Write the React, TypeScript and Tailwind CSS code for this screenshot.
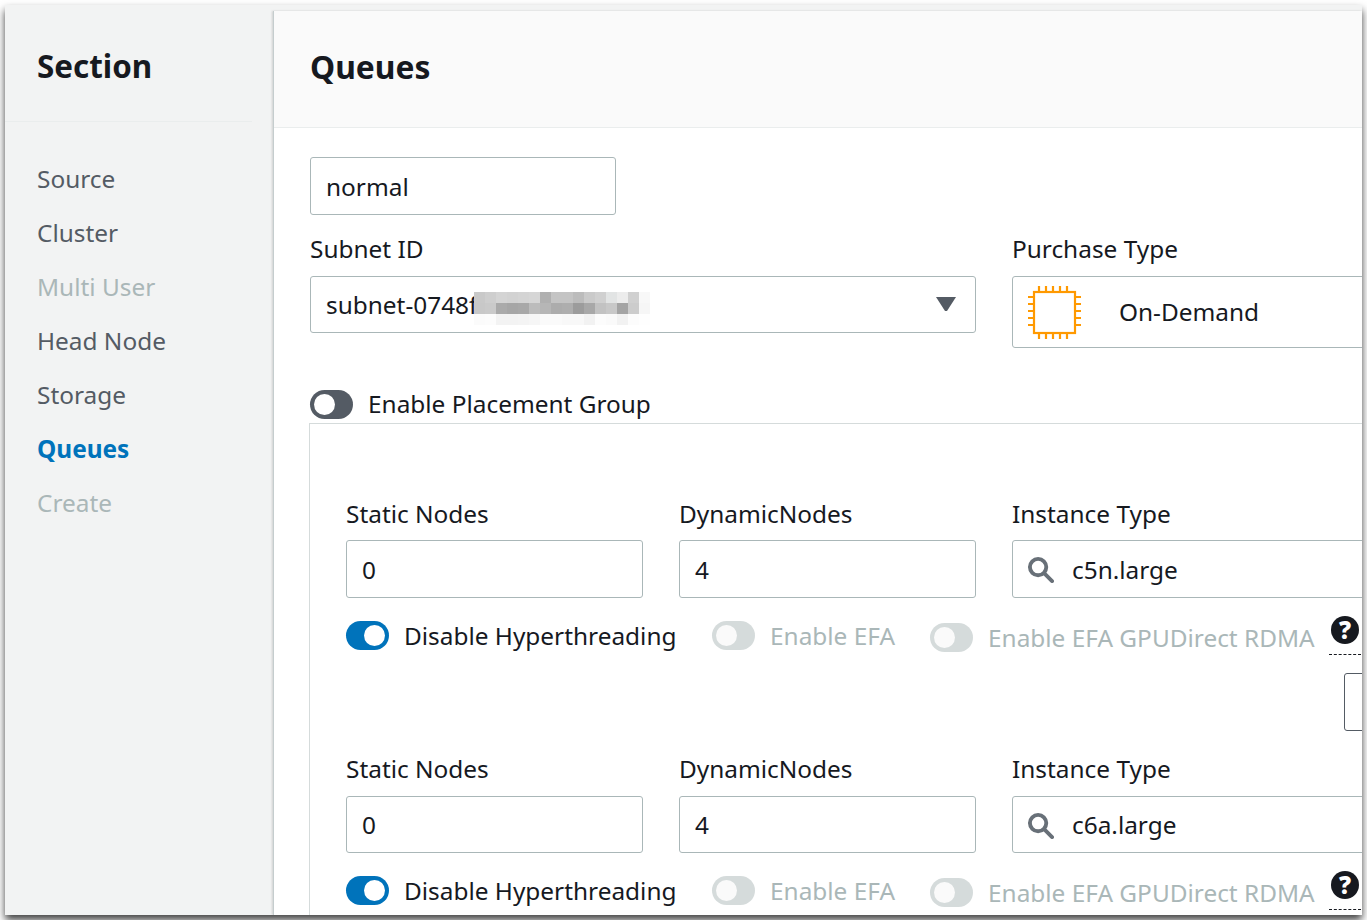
import React from "react";

const font = { fontFamily: '"Noto Sans", sans-serif' };

function Chip() {
  const ticks = [0, 1, 2, 3, 4];
  return (
    <svg width="54" height="54" viewBox="0 0 54 54" fill="none" stroke="#ff9900" strokeWidth="2.2" className="mt-[1px]">
      <rect x="6" y="6" width="41" height="41" />
      {ticks.map((i) => {
        const p = 11 + i * 7;
        return <path key={i} d={`M${p} 0v6M${p} 47v6M0 ${p}h6M47 ${p}h6`} />;
      })}
    </svg>
  );
}

function Toggle({ on, disabled }: { on?: boolean; disabled?: boolean }) {
  const bg = disabled ? "bg-[#d5dbdb]" : on ? "bg-[#0073bb]" : "bg-[#545b64]";
  return (
    <span className={`flex h-[29px] w-[43px] shrink-0 items-center rounded-full px-[4px] ${bg} ${on ? "justify-end" : "justify-start"}`}>
      <span className={`h-[21px] w-[21px] rounded-full ${disabled ? "bg-[#fafafa]" : "bg-white"}`} />
    </span>
  );
}

function Search() {
  return (
    <svg width="27" height="27" viewBox="0 0 28 28" fill="none" stroke="#687078" strokeWidth="4" className="shrink-0">
      <circle cx="11.5" cy="11.5" r="8.5" />
      <path d="M18 18l8 8" strokeLinecap="round" />
    </svg>
  );
}

function Box({ children, className = "" }: { children: React.ReactNode; className?: string }) {
  return (
    <div className={`flex items-center rounded-[3px] border border-[#aab7b8] bg-white text-[24.4px] text-[#16191f] ${className}`}>
      {children}
    </div>
  );
}

function OptionsRow() {
  return (
    <div className="mt-[23px] flex h-[36px] items-start whitespace-nowrap text-[24.4px] leading-[29px]">
      <Toggle on />
      <span className="ml-[15px] w-[308px] shrink-0 text-[#16191f]">Disable Hyperthreading</span>
      <Toggle disabled />
      <span className="ml-[15px] w-[160px] shrink-0 text-[#aab7b8]">Enable EFA</span>
      <div className="mt-[2px] flex">
        <Toggle disabled />
        <span className="ml-[15px] w-[341px] shrink-0 text-[#aab7b8]">Enable EFA GPUDirect RDMA</span>
      </div>
      <div className="-mt-[5px] flex h-[39px] w-[32px] shrink-0 justify-center border-b border-dashed border-[#16191f]">
        <span className="flex h-[28px] w-[28px] items-center justify-center rounded-full bg-[#16191f] text-[24px] font-black leading-none text-white">
          ?
        </span>
      </div>
    </div>
  );
}

function Fields({ type, second }: { type: string; second?: boolean }) {
  const labelH = second ? "h-[45px]" : "h-[44px]";
  const boxH = second ? "h-[57px]" : "h-[58px]";
  return (
    <div className="flex gap-[36px]">
      {[
        ["Static Nodes", "0"],
        ["DynamicNodes", "4"],
      ].map(([l, v]) => (
        <div key={l} className="w-[297px] shrink-0">
          <div className={`${labelH} text-[24.4px] leading-[35px] text-[#16191f]`}>{l}</div>
          <Box className={`${boxH} px-[15px] pt-[2px]`}>{v}</Box>
        </div>
      ))}
      <div className="w-[420px] shrink-0">
        <div className={`${labelH} text-[24.4px] leading-[35px] text-[#16191f]`}>Instance Type</div>
        <Box className={`${boxH} gap-[18px] pl-[14px] pt-[1px]`}>
          <Search />
          <span className="pt-[1px]">{type}</span>
        </Box>
      </div>
    </div>
  );
}

const mosaic = [
  ["#c9c9c9", "#cecece", "#d4d4d4", "#d2d2d2", "#d4d4d4", "#d6d6d6", "#b0b0b0", "#c4c4c4", "#c4c4c4", "#bcbcbc", "#cacaca", "#d0d0d0", "#e2e4e4", "#ececec", "#d0d0d0", "#f8f8f8"],
  ["#c8c8c8", "#cacaca", "#aaaaaa", "#a6a6a6", "#a8a8a8", "#bcbcbc", "#b6b6b6", "#acacac", "#aeaeae", "#9c9c9c", "#a8a8a8", "#c2c2c2", "#c8c8c8", "#a4a4a4", "#cccccc", "#f6f6f6"],
  ["#fbfbfb", "#fcfcfc", "#f3f3f3", "#f3f3f3", "#f4f4f4", "#f6f6f6", "#fafafa", "#fafafa", "#f8f8f8", "#f8f8f8", "#f2f2f2", "#fcfcfc", "#fafafa", "#f2f2f2", "#fcfcfc", "#fefefe"],
];

export default function App() {
  const nav: [string, string][] = [
    ["Source", "text-[#545b64]"],
    ["Cluster", "text-[#545b64]"],
    ["Multi User", "text-[#aab7b8]"],
    ["Head Node", "text-[#545b64]"],
    ["Storage", "text-[#545b64]"],
    ["Queues", "text-[#0073bb] font-bold"],
    ["Create", "text-[#aab7b8]"],
  ];
  return (
    <div style={font} className="h-[920px] w-[1367px] overflow-hidden bg-white p-[5px]">
      <div className="flex h-[910px] overflow-hidden bg-[#f2f3f3] shadow-[0_5px_8px_rgba(0,0,0,0.75)]">
        <aside className="w-[268px] shrink-0 bg-[#f2f3f3]">
          <div className="mr-[21px] h-[117px] border-b border-[#eaeded] pl-[32px] pt-[36px] text-[31.4px] font-bold leading-[50px] text-[#16191f]">
            Section
          </div>
          <nav className="pl-[32px] pt-[30px]">
            {nav.map(([n, c]) => (
              <div key={n} className={`h-[54px] text-[24.4px] leading-[54px] ${c}`}>
                {n}
              </div>
            ))}
          </nav>
        </aside>
        <main className="mt-[6px] min-w-0 flex-1 overflow-hidden border-l border-[#c5cdce] bg-white shadow-[-1px_0_2px_rgba(0,0,0,0.15)]">
          <div className="h-[117px] border-b border-[#eaeded] bg-[#fafafa] pl-[36px] pt-[31px] text-[31.8px] font-bold leading-[50px] text-[#16191f]">
            Queues
          </div>
          <div className="pl-[36px] pt-[29px]">
            <Box className="h-[58px] w-[306px] px-[15px] pt-[2px]">normal</Box>
            <div className="mt-[17px] flex gap-[36px]">
              <div className="w-[666px] shrink-0">
                <div className="h-[44px] text-[24.4px] leading-[34px] text-[#16191f]">Subnet ID</div>
                <Box className="relative h-[57px] justify-between pl-[15px] pr-[18px] pt-[1px]">
                  <span>subnet-0748f</span>
                  <div className="absolute left-[163px] top-[15px] flex h-[33px] w-[176px] flex-col">
                    {mosaic.map((row, i) => (
                      <div key={i} className="flex h-[11px]">
                        {row.map((c, j) => (
                          <span key={j} className="h-[11px] w-[11px]" style={{ background: c }} />
                        ))}
                      </div>
                    ))}
                  </div>
                  <svg width="22" height="16" viewBox="0 0 22 16" className="mb-[3px]">
                    <path d="M1 1h20L12 15h-2z" fill="#545b64" />
                  </svg>
                </Box>
              </div>
              <div className="w-[420px] shrink-0">
                <div className="h-[44px] text-[24.4px] leading-[34px] text-[#16191f]">Purchase Type</div>
                <Box className="h-[72px] pl-[15px]">
                  <Chip />
                  <span className="ml-[37px]">On-Demand</span>
                </Box>
              </div>
            </div>
            <div className="mt-[42px] flex h-[33px] items-start">
              <Toggle />
              <span className="ml-[15px] text-[24.4px] leading-[27px] text-[#16191f]">Enable Placement Group</span>
            </div>
            <div className="-ml-px h-[600px] border-l border-t border-[#d5dbdb] pl-[36px] pt-[72px]">
              <Fields type="c5n.large" />
              <OptionsRow />
              <div className="flex h-[94px]">
                <div className="ml-[998px] mt-[16px] h-[58px] w-[40px] shrink-0 rounded-[3px] border border-[#545b64]" />
              </div>
              <Fields type="c6a.large" second />
              <OptionsRow />
            </div>
          </div>
        </main>
      </div>
    </div>
  );
}
